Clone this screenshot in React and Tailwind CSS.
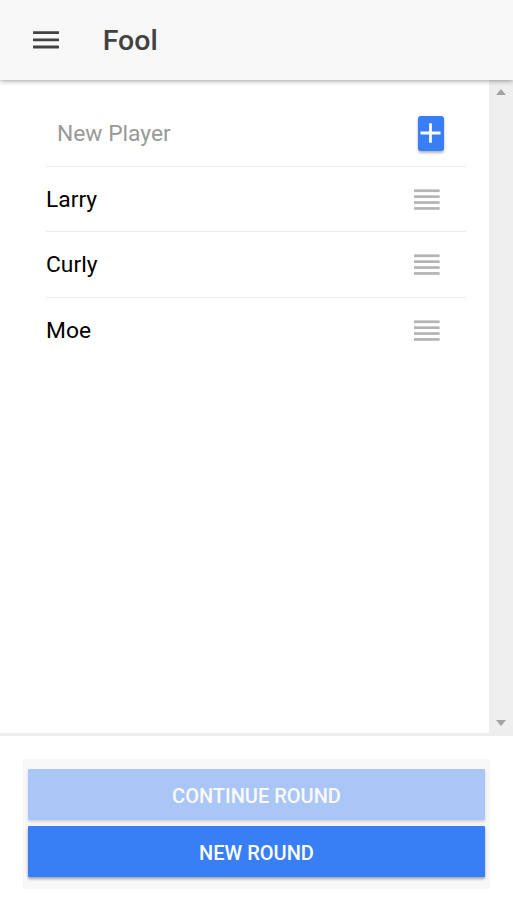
import React, { useState } from 'react'

const MenuIcon = () => (
  <svg className="block" width="26" height="18" viewBox="0 0 26 18" fill="#424242">
    <rect x="0" y="0.2" width="26" height="2.8" rx="0.4" />
    <rect x="0" y="7.4" width="26" height="2.8" rx="0.4" />
    <rect x="0" y="14.6" width="26" height="2.8" rx="0.4" />
  </svg>
);

const ReorderIcon = () => (
  <svg className="block" width="26" height="22" viewBox="0 0 26 22" fill="#b4b4b4">
    <rect x="0" y="0.4" width="25.6" height="2.7" />
    <rect x="0" y="6.3" width="25.6" height="2.7" />
    <rect x="0" y="12.2" width="25.6" height="2.7" />
    <rect x="0" y="18.1" width="25.6" height="2.7" />
  </svg>
);

const ScrollBar = () => (
  <div className="flex w-6 flex-col items-center justify-between bg-[#efefef] pt-[9px] pb-[7px]">
    <svg className="block" width="10" height="6" viewBox="0 0 10 6" fill="#a2a2a2">
      <path d="M0 6L5 0L10 6Z" />
    </svg>
    <svg className="block" width="10" height="6" viewBox="0 0 10 6" fill="#a2a2a2">
      <path d="M0 0L5 6L10 0Z" />
    </svg>
  </div>
);

const App = () => {
  const [players, setPlayers] = useState(['Larry', 'Curly', 'Moe']);
  const [name, setName] = useState('');

  const addPlayer = () => {
    if (name.trim()) {
      setPlayers([...players, name.trim()]);
      setName('');
    }
  };

  return (
    <div className="flex h-[912px] w-full flex-col bg-white font-['Roboto',sans-serif] text-black">
      {/* Header */}
      <header className="relative flex h-20 shrink-0 items-center bg-[#f8f8f8] pl-[32.7px] shadow-[0_1px_5px_rgba(0,0,0,0.38)]">
        <button aria-label="Menu"><MenuIcon /></button>
        <h1 className="ml-[44px] pt-[2px] text-[28.5px] leading-8 font-medium text-[#424242]">Fool</h1>
      </header>

      {/* Players */}
      <main className="flex min-h-0 flex-1">
        <div className="flex-1 pt-[21px] pr-[23px] pl-[46px]">
          <div className="flex h-[65.6px] items-center justify-between border-b border-[#ededed] pr-[22.5px] pl-[11px]">
            <input
              className="w-72 pt-[2px] text-[22.8px] leading-8 outline-none placeholder:text-[#999999]"
              placeholder="New Player"
              value={name}
              onChange={(e) => setName(e.target.value)}
            />
            <button
              aria-label="Add player"
              onClick={addPlayer}
              className="flex h-[35.5px] w-[25.5px] items-center justify-center rounded-[3px] bg-[#387ef5] shadow-[0_2px_3px_rgba(0,0,0,0.3)]"
            >
              <svg className="block" width="21" height="21" viewBox="0 0 21 21" fill="none" stroke="#fff" strokeWidth="2.8">
                <path d="M10.5 0.2V19.8M0.5 10H20.5" />
              </svg>
            </button>
          </div>
          {players.map((player) => (
            <div key={player} className="flex h-[65.6px] items-center justify-between border-b border-[#ededed] pt-[2px] pr-[26px] last:border-transparent">
              <span className="text-[22.8px] leading-8">{player}</span>
              <ReorderIcon />
            </div>
          ))}
        </div>
        <ScrollBar />
      </main>

      {/* Round buttons */}
      <footer className="h-[179px] shrink-0 border-t-[3px] border-[#eeeeee] px-[23px] pt-[22.5px]">
        <div className="flex h-[130.5px] flex-col gap-[6px] bg-[#f8f8f8] px-[5.4px] pt-[10.9px]">
          <button
            disabled
            className="h-[51px] rounded-[1px] bg-[#387ef5] pt-[2px] text-[20px] font-medium text-white opacity-40 shadow-[0_2px_3px_rgba(0,0,0,0.35)]"
          >
            CONTINUE ROUND
          </button>
          <button className="h-[51px] rounded-[1px] bg-[#387ef5] pt-[2px] text-[20px] font-medium text-white shadow-[0_2px_3px_rgba(0,0,0,0.35)]">
            NEW ROUND
          </button>
        </div>
      </footer>
    </div>
  );
};

export default App
